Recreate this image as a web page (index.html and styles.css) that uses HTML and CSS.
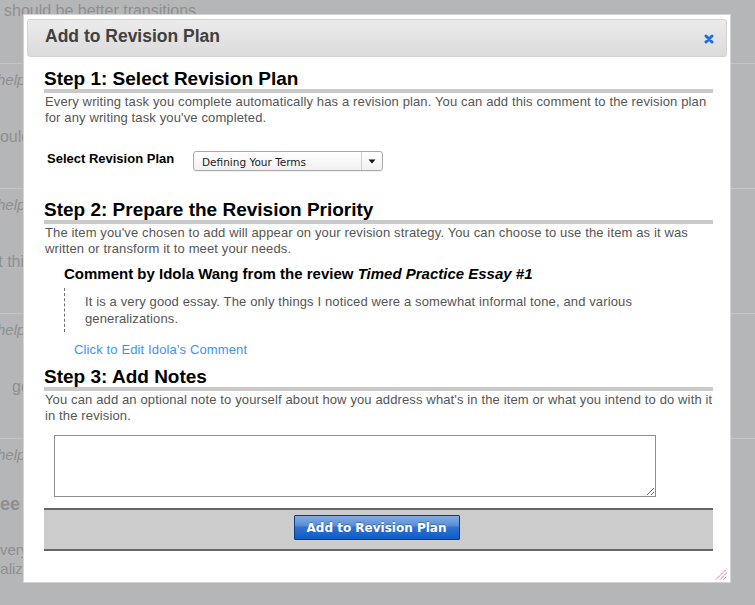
FILE: index.html
```html
<!DOCTYPE html>
<html lang="en">
<head>
<meta charset="utf-8">
<title>Add to Revision Plan</title>
<link rel="stylesheet" href="styles.css">
</head>
<body>
<div class="page">
  <div class="bg-top"><p class="bg-line first">should be better transitions</p></div>
  <div class="bg-item">
    <p class="bg-help">helpful?</p>
    <p class="bg-line l-should">should</p>
  </div>
  <div class="bg-item">
    <p class="bg-help">helpful?</p>
    <p class="bg-line l-this">that this</p>
  </div>
  <div class="bg-item">
    <p class="bg-help">helpful?</p>
    <p class="bg-line l-good">good</p>
  </div>
  <div class="bg-item">
    <p class="bg-help">helpful?</p>
    <p class="bg-line bg-bold l-see">See more</p>
    <p class="bg-line bg-small l-very">very good essay</p>
    <p class="bg-line bg-small l-gen">generalizations.</p>
  </div>
</div>

<div class="modal">
  <div class="modal-title">
    <h1>Add to Revision Plan</h1>
    <span class="close" aria-label="Close">
      <svg width="10" height="10" viewBox="0 0 10 10"><path d="M2 2 L8 8 M8 2 L2 8" stroke="#1b6fe2" stroke-width="3" stroke-linecap="round" fill="none"/></svg>
    </span>
  </div>
  <div class="modal-body">
    <h2 class="step first-step">Step 1: Select Revision Plan</h2>
    <p class="desc">Every writing task you complete automatically has a revision plan. You can add this comment to the revision plan for any writing task you've completed.</p>
    <div class="select-row">
      <label class="select-label">Select Revision Plan</label>
      <div class="select">
        <span class="select-value">Defining Your Terms</span>
        <span class="select-arrow"><svg width="8" height="5" viewBox="0 0 8 5"><path d="M0.5 0.5 L7.5 0.5 L4 4.5 Z" fill="#111"/></svg></span>
      </div>
    </div>

    <h2 class="step step-two">Step 2: Prepare the Revision Priority</h2>
    <p class="desc">The item you've chosen to add will appear on your revision strategy. You can choose to use the item as it was written or transform it to meet your needs.</p>
    <h3 class="comment-title">Comment by Idola Wang from the review <em>Timed Practice Essay #1</em></h3>
    <blockquote class="comment">It is a very good essay. The only things I noticed were a somewhat informal tone, and various generalizations.</blockquote>
    <a class="edit-link" href="#">Click to Edit Idola's Comment</a>

    <h2 class="step step-three">Step 3: Add Notes</h2>
    <p class="desc">You can add an optional note to yourself about how you address what's in the item or what you intend to do with it in the revision.</p>
    <textarea class="notes"></textarea>
    <div class="actions">
      <button class="btn-primary" type="button">Add to Revision Plan</button>
    </div>
  </div>
  <span class="grip">
    <svg width="12" height="12" viewBox="0 0 12 12">
      <path d="M1 11.5 L11.5 1 M5 11.5 L11.5 5 M8.5 11.5 L11.5 8.5" stroke="#d92a8c" stroke-width="1" stroke-dasharray="1.2 0.8" fill="none"/>
    </svg>
  </span>
</div>
</body>
</html>
```
FILE: styles.css
```css
html, body {
  margin: 0;
  padding: 0;
}
body {
  background: #b5b6b8;
  font-family: "Liberation Sans", Arial, sans-serif;
  width: 755px;
  height: 605px;
  overflow: hidden;
  position: relative;
}

/* background page behind the overlay */
.page {
  color: #8e8f91;
}
.bg-top {
  height: 63px;
}
.bg-line {
  margin: 0;
  font-size: 16px;
  line-height: 18px;
  white-space: nowrap;
}
.bg-line.first {
  padding-top: 2px;
  margin-left: 4px;
}
.bg-item {
  height: 124px;
  border-top: 1px solid #c3c4c6;
}
.bg-help {
  margin: 7px 0 0 -3px;
  font-size: 15px;
  line-height: 18px;
  font-style: italic;
  white-space: nowrap;
}
.l-should, .l-this, .l-good {
  margin-top: 39px;
}
.l-should { margin-left: -17px; }
.l-this { margin-left: -24px; }
.l-good { margin-left: 12px; }
.bg-bold {
  font-weight: bold;
  font-size: 18px;
  line-height: 20px;
}
.l-see {
  margin-top: 30px;
  margin-left: -12px;
}
.bg-small {
  font-size: 15px;
  line-height: 19px;
}
.l-very {
  margin-top: 26px;
  margin-left: 0;
}
.l-gen {
  margin-left: -38px;
}

/* modal dialog */
.modal {
  position: absolute;
  left: 23px;
  top: 14px;
  width: 708px;
  height: 569px;
  box-sizing: border-box;
  background: #fff;
  border: 1px solid #d4d4d4;
  padding: 4px 3px 0;
}
.modal-title {
  height: 38px;
  box-sizing: border-box;
  border: 1px solid #d3d3d3;
  border-radius: 3px;
  background: linear-gradient(#ebebeb, #dbdbdb);
  padding: 5px 12px 0 17px;
  display: flex;
  justify-content: space-between;
  align-items: flex-start;
}
.modal-title h1 {
  margin: 0;
  font-size: 17.5px;
  line-height: 22px;
  font-weight: bold;
  color: #404040;
}
.close {
  display: block;
  width: 10px;
  height: 10px;
  margin-top: 9px;
  cursor: pointer;
}
.close svg { display: block; }

.modal-body {
  padding: 0 14px 0 17px;
}
.step {
  margin: 0;
  font-size: 19px;
  line-height: 21px;
  font-weight: bold;
  color: #000;
  border-bottom: 4px solid #c9c9c9;
}
.first-step { margin-top: 11px; }
.step-two { margin-top: 28px; }
.step-three { margin-top: 8px; }
.desc {
  margin: 1px -4px 0 1px;
  font-size: 13px;
  letter-spacing: 0.13px;
  line-height: 16px;
  color: #555;
}

.select-row {
  display: flex;
  align-items: flex-start;
  margin-top: 25px;
  padding-left: 3px;
}
.select-label {
  font-size: 13px;
  font-weight: bold;
  line-height: 15px;
  color: #000;
  margin-top: 0;
  width: 146px;
}
.select {
  width: 190px;
  height: 20px;
  box-sizing: border-box;
  border: 1px solid #a9a9a9;
  border-radius: 3px;
  background: linear-gradient(#ffffff, #f1f1f1);
  box-shadow: 0 1px 0 rgba(0,0,0,0.05);
  display: flex;
  align-items: center;
}
.select-value {
  flex: 1;
  padding-left: 8px;
  font-family: "DejaVu Sans", sans-serif;
  font-size: 10.5px;
  color: #1a1a1a;
  line-height: 18px;
  padding-top: 1px;
}
.select-arrow {
  width: 20px;
  height: 18px;
  border-left: 1px solid #cfcfcf;
  display: flex;
  align-items: center;
  justify-content: center;
}
.select-arrow svg { display: block; }

.comment-title {
  margin: 8px 0 0 20px;
  font-size: 15px;
  line-height: 18px;
  font-weight: bold;
  color: #000;
}
.comment-title em {
  font-style: italic;
}
.comment {
  margin: 5px 0 0 20px;
  padding: 5px 0 5px 20px;
  border-left: 1px dashed #6f6f6f;
  font-size: 13px;
  letter-spacing: 0.13px;
  line-height: 17px;
  color: #555;
}
.edit-link {
  display: block;
  margin: 10px 0 0 30px;
  font-size: 13px;
  letter-spacing: 0.13px;
  line-height: 16px;
  color: #3a95f2;
  text-decoration: none;
}

.notes {
  display: block;
  margin: 11px 0 0 10px;
  width: 602px;
  height: 62px;
  box-sizing: border-box;
  border: 1px solid #8e8e8e;
  padding: 2px;
  font-family: "Liberation Sans", Arial, sans-serif;
  font-size: 13px;
  background: #fff;
}

.actions {
  margin-top: 11px;
  border-top: 2px solid #666;
  border-bottom: 2px solid #666;
  background: #cccccc;
  height: 39px;
  box-sizing: content-box;
  display: flex;
  justify-content: center;
  align-items: flex-start;
  padding-right: 4px;
}
.btn-primary {
  margin-top: 5px;
  width: 166px;
  height: 25px;
  box-sizing: border-box;
  border: 1px solid #0c3b85;
  border-radius: 1px;
  background: linear-gradient(#86ace0 0%, #5b8fd8 40%, #2f71d0 50%, #0d5cc8 100%);
  color: #fff;
  font-family: "DejaVu Sans", sans-serif;
  font-weight: bold;
  font-size: 12px;
  line-height: 22px;
  padding: 0;
  text-shadow: 0 -1px 0 rgba(0,0,0,0.25);
  cursor: pointer;
}

.grip {
  position: absolute;
  right: 3px;
  bottom: 2px;
  width: 12px;
  height: 12px;
}
.grip svg { display: block; }
```
